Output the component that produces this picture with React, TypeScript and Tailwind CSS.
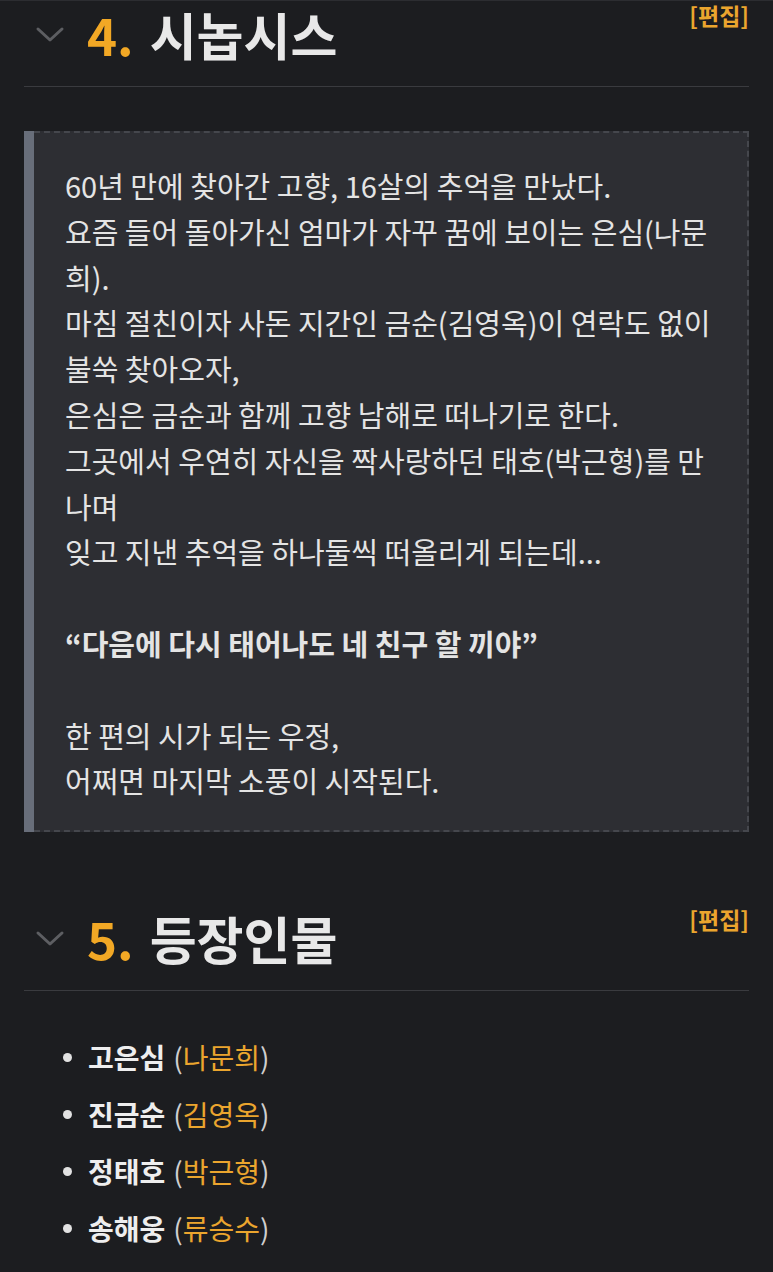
import React from "react";

const Chevron = () => (
  <svg width="30" height="18" viewBox="0 0 30 18" className="shrink-0">
    <path d="M3 3 L15 14 L27 3" fill="none" stroke="#5d5e62" strokeWidth="3" strokeLinecap="round" strokeLinejoin="round" />
  </svg>
);

const Heading = ({ num, title }: { num: string; title: string }) => (
  <div className="flex justify-between items-start h-[86px] border-b border-[#3a3b3f]">
    <h2 className="flex items-center h-[66px] font-bold text-[51px] leading-[66px]">
      <span className="ml-[11px] mr-[22px] mt-[2px] flex"><Chevron /></span>
      <span className="text-[#f2a825]">{num}</span>
      <span className="ml-[16px] text-[#e8e8e8]">{title}</span>
    </h2>
    <span className="text-[23px] leading-[28px] font-bold text-[#eba52e]">[편집]</span>
  </div>
);

const lines: string[] = [
  "60년 만에 찾아간 고향, 16살의 추억을 만났다.",
  "요즘 들어 돌아가신 엄마가 자꾸 꿈에 보이는 은심(나문희).",
  "마침 절친이자 사돈 지간인 금순(김영옥)이 연락도 없이 불쑥 찾아오자,",
  "은심은 금순과 함께 고향 남해로 떠나기로 한다.",
  "그곳에서 우연히 자신을 짝사랑하던 태호(박근형)를 만나며",
  "잊고 지낸 추억을 하나둘씩 떠올리게 되는데...",
];

const cast = [
  ["고은심", "나문희"],
  ["진금순", "김영옥"],
  ["정태호", "박근형"],
  ["송해웅", "류승수"],
];

export default function App() {
  return (
    <div
      className="w-[773px] min-h-[1272px] bg-[#1c1d20] border-t border-[#2c2d31] px-[24px] text-[#e2e2e2]"
      style={{ fontFamily: '"Noto Sans CJK KR", "Noto Sans", sans-serif' }}
    >
      <Heading num="4." title="시놉시스" />

      <blockquote className="mt-[44px] flex bg-[#2d2e33]">
        <div className="w-[10px] shrink-0 bg-[#686e7a]" />
        <div className="flex-1 border-y-2 border-r-2 border-dashed border-[#45474d] pl-[31px] pr-[32px] pt-[30px] pb-[26px] text-[29px] leading-[45.8px] text-[#e4e4e4]">
          {lines.map((l, i) => (
            <div key={i}>{l}</div>
          ))}
          <div>&nbsp;</div>
          <div className="font-bold">“다음에 다시 태어나도 네 친구 할 끼야”</div>
          <div>&nbsp;</div>
          <div>한 편의 시가 되는 우정,</div>
          <div>어쩌면 마지막 소풍이 시작된다.</div>
        </div>
      </blockquote>

      <div className="mt-[73px]">
        <Heading num="5." title="등장인물" />
      </div>

      <ul className="mt-[38px] text-[28px] leading-[57px]">
        {cast.map(([a, b]) => (
          <li key={a} className="flex items-center">
            <span className="ml-[39px] mr-[16px] w-[9px] h-[9px] rounded-full bg-[#e2e2e2]" />
            <span className="font-bold text-[#eeeeee]">{a}</span>
            <span className="ml-[8px] text-[#cfcfcf]">(</span>
            <span className="text-[#eba52e]">{b}</span>
            <span className="text-[#cfcfcf]">)</span>
          </li>
        ))}
      </ul>
    </div>
  );
}
